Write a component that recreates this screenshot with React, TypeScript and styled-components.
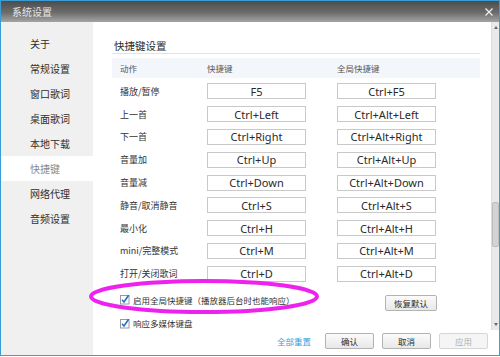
import React from 'react'
import styled, { createGlobalStyle } from 'styled-components'

const GlobalStyle = createGlobalStyle`
  html, body {
    margin: 0;
    padding: 0;
    background: #ffffff;
  }
  body {
    font-family: "Noto Sans CJK SC", "Noto Sans", sans-serif;
  }
`

const CJK = `"Noto Sans CJK SC", "Noto Sans", sans-serif`
const LATIN = `"Noto Sans", "Noto Sans CJK SC", sans-serif`

const Window = styled.div`
  position: relative;
  box-sizing: border-box;
  width: 500px;
  height: 356px;
  border: 1px solid #3c9cd4;
  display: flex;
  flex-direction: column;
  overflow: hidden;
`

const TitleBar = styled.div`
  height: 21px;
  flex: none;
  display: flex;
  align-items: center;
  justify-content: space-between;
  padding: 0 5px 0 11px;
  background: linear-gradient(#4c4c4c, #6c6c6c 55%, #a4a4a4);
  color: #e6e6e6;
  font-family: ${CJK};
  font-size: 10px;
`

const Body = styled.div`
  flex: 1;
  display: flex;
  min-height: 0;
`

const Sidebar = styled.div`
  width: 92px;
  flex: none;
  background: #f0f0f0;
  padding-top: 9px;
  display: flex;
  flex-direction: column;
`

const NavItem = styled.div<{ $active?: boolean }>`
  height: 25px;
  display: flex;
  align-items: center;
  padding-left: 29px;
  font-family: ${CJK};
  font-size: 10px;
  color: ${(p) => (p.$active ? '#8a8a8a' : '#2e2e2e')};
  background: ${(p) => (p.$active ? '#ffffff' : 'transparent')};
`

const Main = styled.div`
  flex: 1;
  display: flex;
  flex-direction: column;
  background: #ffffff;
`

const ScrollArea = styled.div`
  flex: 1;
  display: flex;
  min-height: 0;
`

const Content = styled.div`
  flex: 1;
  padding: 17px 0 0 19px;
`

const Heading = styled.div`
  width: 368px;
  height: 14px;
  line-height: 14px;
  padding-left: 2px;
  box-sizing: border-box;
  border-bottom: 1px solid #e3e3e3;
  font-family: ${CJK};
  font-size: 10.5px;
  color: #2a2a2a;
  box-sizing: content-box;
  width: 366px;
`

const HeaderRow = styled.div`
  margin-top: 4px;
  width: 368px;
  height: 20px;
  background: #f3f7fc;
  display: grid;
  grid-template-columns: 95px 130px 99px;
  align-items: center;
  font-family: ${CJK};
  font-size: 8.5px;
  color: #555555;
`

const HeadCell = styled.div<{ $pad?: number }>`
  padding-left: ${(p) => p.$pad ?? 0}px;
`

const KeyRow = styled.div`
  width: 368px;
  height: 22.8px;
  display: grid;
  grid-template-columns: 95px 130px 99px;
  align-items: center;
`

const Rows = styled.div`
  padding-top: 2px;
`

const Label = styled.div`
  padding-left: 8px;
  font-family: ${CJK};
  font-size: 9px;
  color: #333333;
`

const KeyBox = styled.div`
  box-sizing: border-box;
  width: 99px;
  height: 16px;
  border: 1px solid #c9c9c9;
  display: flex;
  align-items: center;
  justify-content: center;
  font-family: ${LATIN};
  font-size: 11px;
  color: #2a2a2a;
`

const Options = styled.div`
  width: 368px;
  padding-top: 3px;
`

const OptionRow = styled.div`
  height: 23.5px;
  display: flex;
  align-items: center;
  justify-content: space-between;
  padding-left: 8px;
  padding-right: 43px;
`

const Check = styled.label`
  display: flex;
  align-items: center;
  gap: 3px;
  font-family: ${CJK};
  font-size: 8.5px;
  color: #333333;
`

const Button = styled.div<{ $disabled?: boolean; $w?: number }>`
  box-sizing: border-box;
  width: ${(p) => p.$w ?? 49}px;
  height: 16px;
  display: flex;
  align-items: center;
  justify-content: center;
  border: 1px solid ${(p) => (p.$disabled ? '#d6d6d6' : '#b3b3b3')};
  border-radius: 2px;
  background: ${(p) =>
    p.$disabled ? '#f5f5f5' : 'linear-gradient(#fbfbfb, #e8e8e8)'};
  font-family: ${CJK};
  font-size: 8.5px;
  color: ${(p) => (p.$disabled ? '#b2b2b2' : '#2a2a2a')};
`

const ResetButton = styled(Button)`
  margin-top: 7px;
`

const Scrollbar = styled.div`
  width: 8px;
  flex: none;
  background: #e9e9e9;
  border-left: 1px solid #dcdcdc;
  display: flex;
  flex-direction: column;
  align-items: center;
  justify-content: space-between;
  position: relative;
  padding: 4px 0 4px;
  box-sizing: border-box;
`

const Arrow = styled.div<{ $down?: boolean }>`
  width: 0;
  height: 0;
  border-left: 2.5px solid transparent;
  border-right: 2.5px solid transparent;
  ${(p) =>
    p.$down
      ? 'border-top: 3px solid #6a6a6a;'
      : 'border-bottom: 3px solid #6a6a6a;'}
`

const Thumb = styled.div`
  position: absolute;
  left: 0;
  right: 0;
  top: 180px;
  height: 43px;
  background: #d3d3d3;
  border: 1px solid #bdbdbd;
  border-radius: 2px;
`

const Footer = styled.div`
  height: 25px;
  flex: none;
  display: flex;
  align-items: flex-start;
  justify-content: flex-end;
  gap: 8px;
  padding: 3px 11px 0 0;
  box-sizing: border-box;
`

const Link = styled.div`
  height: 16px;
  display: flex;
  align-items: center;
  margin-right: 6px;
  font-family: ${CJK};
  font-size: 8.5px;
  color: #3a9ee0;
`

const Annotation = styled.svg`
  position: absolute;
  left: 0;
  top: 0;
  pointer-events: none;
`

const rows: [string, string, string][] = [
  ['播放/暂停', 'F5', 'Ctrl+F5'],
  ['上一首', 'Ctrl+Left', 'Ctrl+Alt+Left'],
  ['下一首', 'Ctrl+Right', 'Ctrl+Alt+Right'],
  ['音量加', 'Ctrl+Up', 'Ctrl+Alt+Up'],
  ['音量减', 'Ctrl+Down', 'Ctrl+Alt+Down'],
  ['静音/取消静音', 'Ctrl+S', 'Ctrl+Alt+S'],
  ['最小化', 'Ctrl+H', 'Ctrl+Alt+H'],
  ['mini/完整模式', 'Ctrl+M', 'Ctrl+Alt+M'],
  ['打开/关闭歌词', 'Ctrl+D', 'Ctrl+Alt+D'],
]

const nav = ['关于', '常规设置', '窗口歌词', '桌面歌词', '本地下载', '快捷键', '网络代理', '音频设置']

function CheckIcon() {
  return (
    <svg width="10" height="11" viewBox="0 0 10 11">
      <rect x="0.5" y="1.5" width="8.5" height="8.5" fill="#fff" stroke="#9a9a9a" />
      <path d="M2 5.8 L4 8 L8.6 1.2" fill="none" stroke="#2273c8" strokeWidth="1.6" />
    </svg>
  )
}

function CloseIcon() {
  return (
    <svg width="10" height="10" viewBox="0 0 10 10">
      <path d="M1.5 1.5 L8.5 8.5 M8.5 1.5 L1.5 8.5" stroke="#f2f2f2" strokeWidth="1.2" />
    </svg>
  )
}

export default function App() {
  return (
    <>
      <GlobalStyle />
      <Window>
        <TitleBar>
          <span>系统设置</span>
          <CloseIcon />
        </TitleBar>
        <Body>
          <Sidebar>
            {nav.map((n) => (
              <NavItem key={n} $active={n === '快捷键'}>
                {n}
              </NavItem>
            ))}
          </Sidebar>
          <Main>
            <ScrollArea>
              <Content>
                <Heading>快捷键设置</Heading>
                <HeaderRow>
                  <HeadCell $pad={8}>动作</HeadCell>
                  <HeadCell>快捷键</HeadCell>
                  <HeadCell>全局快捷键</HeadCell>
                </HeaderRow>
                <Rows>
                  {rows.map(([label, key, global]) => (
                    <KeyRow key={label}>
                      <Label>{label}</Label>
                      <KeyBox>{key}</KeyBox>
                      <KeyBox>{global}</KeyBox>
                    </KeyRow>
                  ))}
                </Rows>
                <Options>
                  <OptionRow>
                    <Check>
                      <CheckIcon />
                      启用全局快捷键（播放器后台时也能响应）
                    </Check>
                    <ResetButton $w={52}>恢复默认</ResetButton>
                  </OptionRow>
                  <OptionRow>
                    <Check>
                      <CheckIcon />
                      响应多媒体键盘
                    </Check>
                  </OptionRow>
                </Options>
              </Content>
              <Scrollbar>
                <Arrow />
                <Thumb />
                <Arrow $down />
              </Scrollbar>
            </ScrollArea>
            <Footer>
              <Link>全部重置</Link>
              <Button>确认</Button>
              <Button>取消</Button>
              <Button $disabled>应用</Button>
            </Footer>
          </Main>
        </Body>
        <Annotation width="500" height="357" viewBox="0 0 500 357">
          <ellipse cx="203" cy="295.5" rx="113" ry="15.5" fill="none" stroke="#ee22ee" strokeWidth="4" />
        </Annotation>
      </Window>
    </>
  )
}
